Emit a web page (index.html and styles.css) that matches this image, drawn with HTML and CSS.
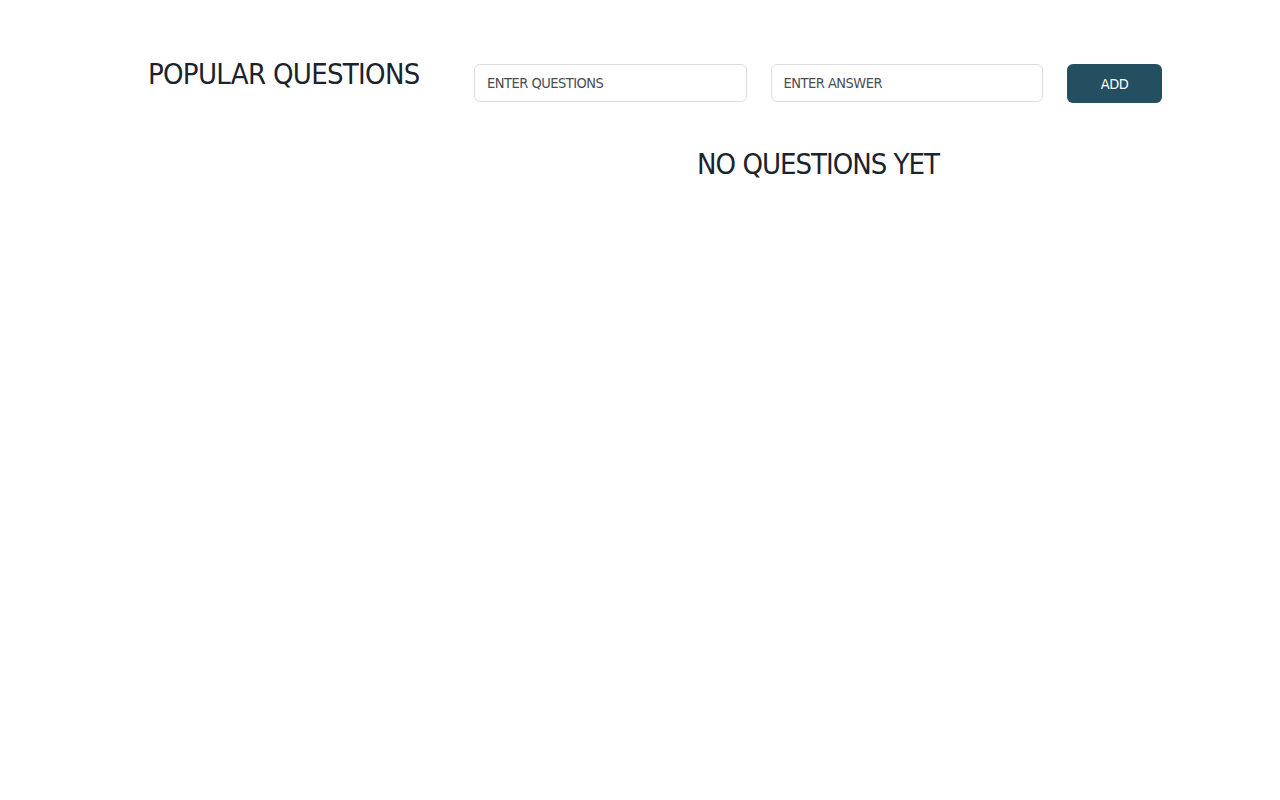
FILE: index.html
```html
<!DOCTYPE html>
<html lang="en">
<head>
<meta charset="utf-8">
<title>Popular Questions</title>
<link rel="stylesheet" href="styles.css">
</head>
<body>
<main class="page">
  <h1 class="title">POPULAR QUESTIONS</h1>
  <section class="content">
    <form class="ask-form">
      <input class="field" type="text" placeholder="ENTER QUESTIONS">
      <input class="field" type="text" placeholder="ENTER ANSWER">
      <button class="add-btn" type="button">ADD</button>
    </form>
    <h2 class="empty">NO QUESTIONS YET</h2>
  </section>
</main>
</body>
</html>
```
FILE: styles.css
```css
html, body {
  margin: 0;
  background: #ffffff;
}
body {
  font-family: "DejaVu Sans Condensed", "DejaVu Sans", sans-serif;
  color: #1d2630;
}
.page {
  display: grid;
  grid-template-columns: 302px 688px;
  column-gap: 24px;
  padding: 55px 0 0 148px;
  align-items: start;
}
.title {
  margin: 0;
  font-size: 29px;
  font-weight: 400;
  letter-spacing: -0.7px;
  line-height: 38px;
  color: #1b232d;
  white-space: nowrap;
}
.content {
  padding-top: 9px;
}
.ask-form {
  display: flex;
  gap: 24px;
  align-items: flex-start;
}
.field {
  flex: 1;
  min-width: 0;
  box-sizing: border-box;
  height: 38px;
  padding: 0 12px;
  border: 1px solid #dcdce1;
  border-radius: 6px;
  font-family: inherit;
  font-size: 14.5px;
  letter-spacing: -0.5px;
  color: #333;
  outline: none;
  background: #fff;
}
.field::placeholder {
  color: #4a4d53;
  opacity: 1;
}
.add-btn {
  width: 95px;
  height: 39px;
  border: 0;
  border-radius: 6px;
  background: #244f60;
  color: #ffffff;
  font-family: inherit;
  font-size: 14.5px;
  letter-spacing: -0.5px;
  cursor: pointer;
}
.empty {
  margin: 44px 0 0;
  text-align: center;
  font-size: 29px;
  font-weight: 400;
  letter-spacing: -1px;
  line-height: normal;
  color: #1b232d;
}
```
